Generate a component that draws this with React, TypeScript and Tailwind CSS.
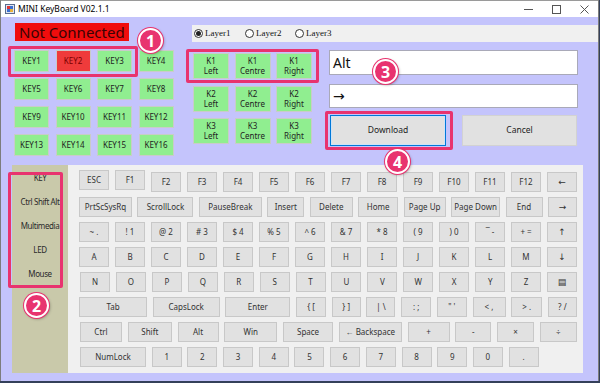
type Key = { label: string; w?: string; extra?: string };

const keys = (labels: string[]): Key[] => labels.map((label) => ({ label }));

const arrow = "font-['DejaVu_Sans',sans-serif] text-[9px]";

const keyRows: { keys: Key[]; cls: string }[] = [
  {
    cls: 'w-[498px] justify-between',
    keys: [
      { label: 'ESC', extra: '-translate-y-[2px]' },
      { label: 'F1', extra: '-translate-y-[2px]' },
      ...keys(['F2', 'F3', 'F4', 'F5', 'F6', 'F7', 'F8', 'F9', 'F10', 'F11', 'F12']),
      { label: '←', extra: arrow },
    ],
  },
  {
    cls: 'w-[498px] justify-between',
    keys: [
      { label: 'PrtScSysRq', w: 'w-[53px]' },
      { label: 'ScrollLock', w: 'w-[56px]' },
      { label: 'PauseBreak', w: 'w-[63px]' },
      { label: 'Insert', w: 'w-[37px]' },
      { label: 'Delete', w: 'w-[43px]' },
      { label: 'Home', w: 'w-[40px]' },
      { label: 'Page Up', w: 'w-[42px]' },
      { label: 'Page Down', w: 'w-[49px]' },
      { label: 'End', w: 'w-[37px]' },
      { label: '→', w: 'w-[29px]', extra: arrow },
    ],
  },
  {
    cls: 'w-[498px] justify-between',
    keys: [
      ...keys(['~ .', '! 1', '@ 2', '# 3', '$ 4', '% 5', '^ 6', '& 7', '* 8', '( 9', ') 0', '‾ -', '+ =']),
      { label: '↑', extra: arrow },
    ],
  },
  {
    cls: 'w-[498px] justify-between',
    keys: [...keys(['A', 'B', 'C', 'D', 'E', 'F', 'G', 'H', 'I', 'J', 'K', 'L', 'M']), { label: '↓', extra: arrow }],
  },
  {
    cls: 'ml-[1px] w-[497px] justify-between',
    keys: [...keys(['N', 'O', 'P', 'Q', 'R', 'S', 'T', 'U', 'V', 'W', 'X', 'Y', 'Z']), { label: '▤', extra: arrow }],
  },
  {
    cls: 'w-[498px] justify-between',
    keys: [
      { label: 'Tab', w: 'w-[68px]' },
      { label: 'CapsLock', w: 'w-[67px]' },
      { label: 'Enter', w: 'w-[65px]' },
      { label: '{ [', w: 'w-[30px]' },
      { label: '} ]', w: 'w-[29px]' },
      { label: '| \\', w: 'w-[29px]' },
      { label: ': ;', w: 'w-[30px]' },
      { label: '" \'', w: 'w-[30px]' },
      { label: '< ,', w: 'w-[33px]' },
      { label: '> .', w: 'w-[31px]' },
      { label: '? /', w: 'w-[29px]' },
    ],
  },
  {
    cls: 'ml-[1px] w-[497px] justify-between',
    keys: [
      { label: 'Ctrl', w: 'w-[42px]' },
      { label: 'Shift', w: 'w-[44px]' },
      { label: 'Alt', w: 'w-[41px]' },
      { label: 'Win', w: 'w-[53px]' },
      { label: 'Space', w: 'w-[50px]' },
      { label: '← Backspace', w: 'w-[63px]' },
      { label: '+', w: 'w-[42px]' },
      { label: '-', w: 'w-[36px]' },
      { label: '×', w: 'w-[37px]' },
      { label: '÷', w: 'w-[37px]' },
    ],
  },
  {
    cls: 'ml-[1px] gap-[5.7px]',
    keys: [{ label: 'NumLock', w: 'w-[66px]' }, ...keys(['1', '2', '3', '4', '5', '6', '7', '8', '9', '0', '.'])],
  },
];

const padKeys = Array.from({ length: 16 }, (_, i) => `KEY${i + 1}`);
const knobs = ['K1', 'K2', 'K3'];
const knobParts = ['Left', 'Centre', 'Right'];
const sideTabs = ['KEY', 'Ctrl Shift Alt', 'Multimedia', 'LED', 'Mouse'];

const KbKey = ({ k }: { k: Key }) => (
  <div
    className={`flex h-[20px] shrink-0 items-center justify-center border border-[#c8c8c8] bg-[#e1e1e1] text-[8px] leading-none text-[#333] ${
      k.w ?? 'w-[30px]'
    } ${k.extra ?? ''}`}
  >
    {k.label}
  </div>
);

const Badge = ({ n, cls }: { n: string; cls: string }) => (
  <div
    className={`absolute flex items-center justify-center rounded-full border-2 border-white bg-[#e8336f] text-[16px] font-bold leading-none text-white shadow-[0_0_0_1px_#e8336f,1px_1px_3px_rgba(0,0,0,0.35)] ${cls}`}
  >
    {n}
  </div>
);

const Radio = ({ label, on, w }: { label: string; on?: boolean; w: string }) => (
  <div className={`flex items-center gap-[2px] ${w}`}>
    <span className="flex h-[9px] w-[9px] items-center justify-center rounded-full border border-[#333] bg-white">
      {on && <span className="h-[5px] w-[5px] rounded-full bg-[#222]" />}
    </span>
    <span className="font-['Liberation_Serif',serif] text-[9px] text-[#111]">{label}</span>
  </div>
);

const App = () => {
  return (
    <div className="relative h-[383px] w-[600px] overflow-hidden bg-[#34405a] font-['Noto_Sans','Liberation_Sans',sans-serif]">
      <div className="flex h-[381px] w-[599px] flex-col border-x border-[#7d7d7d] bg-[#c4c4fc]">
        {/* Title bar */}
        <div className="flex h-[17px] shrink-0 items-center border-t border-[#9a9a9a] bg-white">
          <svg className="ml-[4px]" width="10" height="10" viewBox="0 0 10 10">
            <rect x="0.5" y="0.5" width="9" height="9" fill="#dfe6f3" stroke="#5a6d8f" />
            <rect x="2" y="2" width="3" height="3" fill="#d33" />
            <rect x="5" y="2" width="3" height="3" fill="#3a6fd1" />
            <rect x="2" y="5" width="3" height="3" fill="#3a6fd1" />
            <rect x="5" y="5" width="3" height="3" fill="#e9b13a" />
          </svg>
          <span className="ml-[3px] text-[8.5px] text-black">MINI KeyBoard V02.1.1</span>
          <div className="ml-auto flex h-full">
            <div className="flex w-[28px] items-center justify-center">
              <svg width="9" height="9" viewBox="0 0 9 9">
                <line x1="0" y1="4.5" x2="9" y2="4.5" stroke="#555" />
              </svg>
            </div>
            <div className="flex w-[28px] items-center justify-center">
              <svg width="9" height="9" viewBox="0 0 9 9">
                <rect x="0.5" y="0.5" width="8" height="8" fill="none" stroke="#555" />
              </svg>
            </div>
            <div className="flex w-[28px] items-center justify-center">
              <svg width="9" height="9" viewBox="0 0 9 9">
                <path d="M0.5 0.5 L8.5 8.5 M8.5 0.5 L0.5 8.5" stroke="#555" />
              </svg>
            </div>
          </div>
        </div>

        {/* Top section */}
        <div className="flex h-[148px] shrink-0">
          <div className="w-[191px] shrink-0 pl-[13px]">
            <div className="ml-[1px] mt-[6px] h-[18px] w-[114px] bg-[#f00d0d] pl-[4px] text-[15px] leading-[18px] text-[#3a0404]">
              Not Connected
            </div>
            <div className="mt-[9px] grid grid-cols-[repeat(4,35px)] gap-x-[6.5px] gap-y-[6px]">
              {padKeys.map((k) => (
                <div
                  key={k}
                  className={`flex h-[22px] items-center justify-center border border-[#c9cbc9] text-[8px] ${
                    k === 'KEY2' ? 'bg-[#ef3b3b] text-[#7a0000]' : 'bg-[#90ee90] text-[#222]'
                  }`}
                >
                  {k}
                </div>
              ))}
            </div>
          </div>

          <div className="flex-1">
            <div className="mt-[8px] flex h-[17px] items-center bg-[#f0f0f0] pl-[2px]">
              <Radio label="Layer1" on w="w-[51px]" />
              <Radio label="Layer2" w="w-[50px]" />
              <Radio label="Layer3" w="w-[50px]" />
            </div>

            <div className="mt-[8px] flex items-start">
              <div className="ml-[1px] mt-[3px] grid grid-cols-[repeat(3,36px)] gap-x-[5.5px] gap-y-[6.5px]">
                {knobs.map((k) =>
                  knobParts.map((p) => (
                    <div
                      key={k + p}
                      className="flex h-[26px] flex-col items-center justify-center border border-[#c9cbc9] bg-[#90ee90] text-[8px] leading-[10px] text-[#222]"
                    >
                      <span>{k}</span>
                      <span>{p}</span>
                    </div>
                  ))
                )}
              </div>

              <div className="ml-[17px] flex w-[249px] flex-col">
                <div className="flex h-[25px] items-center border border-[#a9a9b8] bg-white pl-[3px] text-[14px] text-[#111]">
                  Alt
                </div>
                <div className="mt-[9px] flex h-[24px] items-center border border-[#a9a9b8] bg-white pl-[3px] font-['DejaVu_Sans',sans-serif] text-[14px] leading-none text-[#111]">
                  →
                </div>
                <div className="ml-[1px] mt-[7px] flex gap-[16px]">
                  <div className="flex h-[31px] w-[116px] items-center justify-center border border-[#0078d7] bg-[#e1e1e1] text-[8.5px] text-[#222] shadow-[inset_0_0_0_1px_#cfe3f7]">
                    Download
                  </div>
                  <div className="flex h-[31px] w-[115px] items-center justify-center border border-[#d2d2d2] bg-[#e1e1e1] text-[8.5px] text-[#222]">
                    Cancel
                  </div>
                </div>
              </div>
            </div>
          </div>
        </div>

        {/* Lower section */}
        <div className="flex h-[208px] shrink-0 pl-[11px]">
          <div className="flex w-[56px] flex-col bg-[#c9c9aa] pt-[1px]">
            {sideTabs.map((t) => (
              <div
                key={t}
                className="flex h-[24px] items-center justify-center whitespace-nowrap text-[8px] tracking-[-0.4px] text-[#2a2a2a]"
              >
                {t}
              </div>
            ))}
          </div>
          <div className="flex w-[515px] flex-col gap-[5px] bg-[#f0f0f0] pl-[11px] pt-[7px]">
            {keyRows.map((r, i) => (
              <div key={i} className={`flex ${r.cls}`}>
                {r.keys.map((k) => (
                  <KbKey key={k.label} k={k} />
                ))}
              </div>
            ))}
          </div>
        </div>
      </div>

      {/* Annotations */}
      <div className="absolute left-[8px] top-[46px] h-[31px] w-[130px] rounded-[2px] border-[3px] border-[#e8336f]" />
      <div className="absolute left-[186px] top-[49px] h-[34px] w-[133px] rounded-[2px] border-[3px] border-[#e8336f]" />
      <div className="absolute left-[325px] top-[111px] h-[39px] w-[128px] rounded-[2px] border-[3px] border-[#e8336f]" />
      <div className="absolute left-[8px] top-[172px] h-[116px] w-[55px] rounded-[2px] border-[3px] border-[#e8336f]" />

      <Badge n="1" cls="left-[138px] top-[28px] h-[25px] w-[25px]" />
      <Badge n="2" cls="left-[24px] top-[293px] h-[25px] w-[25px]" />
      <Badge n="3" cls="left-[373px] top-[59px] h-[25px] w-[25px]" />
      <Badge n="4" cls="left-[385px] top-[149px] h-[25px] w-[25px]" />
    </div>
  );
};

export default App;
